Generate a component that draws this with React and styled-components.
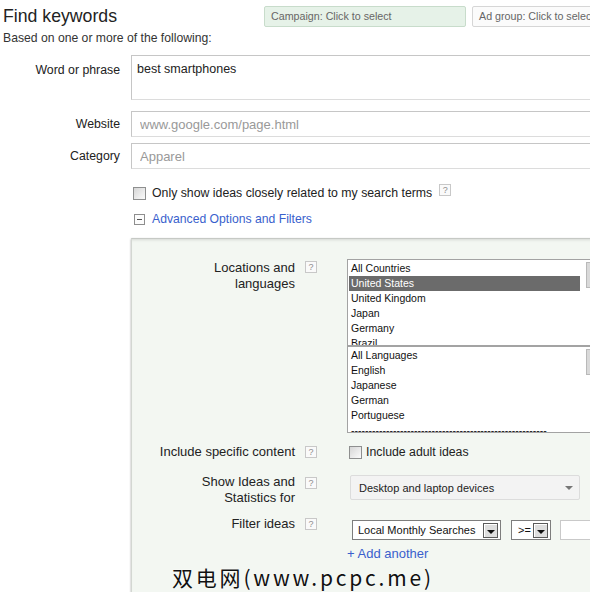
import React from 'react';
import styled, { createGlobalStyle } from 'styled-components';

const Global = createGlobalStyle`
  html, body { margin: 0; padding: 0; background: #fff; overflow: hidden; }
  body { font-family: "Liberation Sans", Arial, sans-serif; color: #222; }
`;

const Page = styled.div`
  width: 760px;
  padding: 6px 0 0 3px;
`;

const Header = styled.div`
  display: flex;
  align-items: flex-start;
`;

const TitleBlock = styled.div`
  width: 261px;
`;

const Title = styled.h1`
  margin: 0;
  font-size: 17.7px;
  line-height: 21px;
  font-weight: normal;
  color: #222;
`;

const Subtitle = styled.div`
  margin-top: 4px;
  font-size: 12.2px;
  line-height: 15px;
  color: #333;
`;

const Selectors = styled.div`
  display: flex;
  gap: 6px;
`;

const SelectorButton = styled.div`
  box-sizing: border-box;
  height: 21px;
  width: ${p => p.$w}px;
  padding: 0 6px;
  font-size: 10.7px;
  line-height: 19px;
  color: #666;
  border: 1px solid ${p => (p.$active ? '#c8dccb' : '#d6d6d6')};
  background: ${p => (p.$active ? '#e6f2e8' : '#fbfbfb')};
  border-radius: 2px;
  white-space: nowrap;
  overflow: hidden;
`;

const Form = styled.div`
  margin-top: 9px;
`;

const FormRow = styled.div`
  display: grid;
  grid-template-columns: 117px 1fr;
  column-gap: 11px;
  align-items: ${p => p.$align || 'center'};
  margin-top: ${p => p.$mt || 0}px;
`;

const FieldLabel = styled.label`
  text-align: right;
  font-size: 12.3px;
  line-height: 15px;
  color: #222;
  padding-top: ${p => p.$pt || 0}px;
`;

const TextArea = styled.textarea`
  display: block;
  box-sizing: border-box;
  width: 480px;
  height: 45px;
  margin: 0;
  border: 1px solid #c6c6c6;
  border-bottom-color: #dcdcdc;
  padding: 6px 5px;
  font: 12.5px/15px "Liberation Sans", Arial, sans-serif;
  color: #222;
  resize: none;
  overflow: hidden;
  outline: none;
`;

const TextInput = styled.input`
  display: block;
  box-sizing: border-box;
  width: 480px;
  height: 26px;
  margin: 0;
  border: 1px solid #c6c6c6;
  border-bottom-color: #dcdcdc;
  padding: 0 8px;
  font: 13px "Liberation Sans", Arial, sans-serif;
  color: #222;
  outline: none;
  &::placeholder { color: #999; }
`;

const OptionLine = styled.div`
  display: flex;
  align-items: center;
  height: 16px;
  font-size: 12.3px;
  line-height: 16px;
  color: #222;
  padding-left: ${p => p.$pl || 0}px;
`;

const Checkbox = styled.span`
  box-sizing: border-box;
  width: 13px;
  height: 13px;
  flex: none;
  border: 1px solid #8e8f8f;
  background: linear-gradient(135deg, #d6d6d6, #fbfbfb);
  margin-right: ${p => p.$gap || 6}px;
`;

const Help = styled.span`
  box-sizing: border-box;
  display: inline-flex;
  align-items: center;
  justify-content: center;
  width: 12px;
  height: 12px;
  border: 1px solid #c8c8c8;
  background: #fafafa;
  color: #8e8e8e;
  font-size: 9px;
  line-height: 10px;
  margin-left: ${p => p.$ml || 0}px;
  margin-top: ${p => p.$mt || 0}px;
  flex: none;
`;

const ToggleBox = styled.span`
  position: relative;
  box-sizing: border-box;
  width: 11px;
  height: 11px;
  border: 1px solid #8e8e8e;
  background: #fcfcfc;
  margin: 0 7px 0 1px;
  flex: none;
  &::after {
    content: '';
    position: absolute;
    left: 2px;
    right: 2px;
    top: 4px;
    height: 1px;
    background: #555;
  }
`;

const Link = styled.span`
  color: #3a5fcd;
  font-size: 12.2px;
  cursor: pointer;
`;

const Panel = styled.div`
  margin: 11px 0 0 128px;
  width: 620px;
  background: #f3f7f2;
  border-top: 1px solid #c6c9c5;
  border-left: 1px solid #d3d7d2;
  box-shadow: inset 0 3px 3px -2px rgba(0, 0, 0, 0.12), 0 1px 2px rgba(0, 0, 0, 0.35);
  padding: 21px 0 3px;
`;

const PanelRow = styled.div`
  display: grid;
  grid-template-columns: 163px 32px 1fr;
  column-gap: 10px;
  align-items: start;
  margin-top: ${p => p.$mt || 0}px;
`;

const PanelLabel = styled.div`
  text-align: right;
  font-size: 13px;
  line-height: 16px;
  color: #222;
`;

const ListStack = styled.div`
  display: flex;
  flex-direction: column;
  width: 256px;
  margin-top: -1px;
`;

const ListBox = styled.div`
  box-sizing: border-box;
  display: flex;
  height: 87px;
  border: 1px solid #a3a3a3;
  background: #fff;
  overflow: hidden;
`;

const Options = styled.div`
  width: 231px;
  margin-left: 1px;
  padding-top: 1px;
`;

const Option = styled.div`
  height: 15px;
  padding: 0 2px;
  font-size: 10.5px;
  line-height: 15px;
  white-space: nowrap;
  overflow: hidden;
  color: ${p => (p.$selected ? '#fff' : '#111')};
  background: ${p => (p.$selected ? '#6b6b6b' : 'transparent')};
`;

const ScrollTrack = styled.div`
  margin-left: auto;
  width: 16px;
  padding-top: 2px;
`;

const ScrollThumb = styled.div`
  box-sizing: border-box;
  width: 16px;
  height: 26px;
  border: 1px solid #b9b9b9;
  background: #d9d9d9;
`;

const DropButton = styled.div`
  box-sizing: border-box;
  display: flex;
  align-items: center;
  justify-content: space-between;
  width: 230px;
  height: 25px;
  margin: 1px 0 0 3px;
  padding: 0 6px 0 8px;
  border: 1px solid #dcdcdc;
  border-radius: 2px;
  background: #f3f3f3;
  font-size: 11px;
  color: #222;
`;

const Caret = styled.span`
  width: 0;
  height: 0;
  border-left: 4px solid transparent;
  border-right: 4px solid transparent;
  border-top: 4px solid #777;
`;

const FilterLine = styled.div`
  display: flex;
  align-items: center;
  margin: 4px 0 0 5px;
`;

const SelectBox = styled.div`
  box-sizing: border-box;
  display: flex;
  align-items: center;
  justify-content: space-between;
  width: ${p => p.$w}px;
  height: 20px;
  margin-right: ${p => p.$mr || 0}px;
  padding: 0 2px 0 ${p => p.$pl || 5}px;
  border: 1px solid #7d7d7d;
  background: #fff;
  font-size: 11px;
  color: #111;
  white-space: nowrap;
`;

const SelectArrow = styled.span`
  box-sizing: border-box;
  display: flex;
  align-items: center;
  justify-content: center;
  width: 15px;
  height: 15px;
  border: 1px solid #5a5a5a;
  background: #dedede;
  box-shadow: inset 1px 1px 0 #fff;
  &::after {
    content: '';
    margin-top: 3px;
    border-left: 4px solid transparent;
    border-right: 4px solid transparent;
    border-top: 4px solid #111;
  }
`;

const SmallInput = styled.div`
  box-sizing: border-box;
  width: 60px;
  height: 20px;
  border: 1px solid #c9c9c9;
  background: #fff;
`;

const AddLink = styled.div`
  margin-top: 6px;
  font-size: 13px;
  line-height: 16px;
  color: #3a5fcd;
`;

const Watermark = styled.div`
  margin-top: 3px;
  padding-left: 40px;
  height: 24px;
  font-family: "Noto Sans CJK SC", sans-serif;
  font-size: 21px;
  line-height: 24px;
  letter-spacing: 2.8px;
  color: #111;
  text-shadow: 0 0 2px #fff;
  white-space: nowrap;
`;

const countries = ['All Countries', 'United States', 'United Kingdom', 'Japan', 'Germany', 'Brazil'];
const languages = ['All Languages', 'English', 'Japanese', 'German', 'Portuguese', '-'.repeat(56)];

export default function App() {
  return (
    <Page>
      <Global />
      <Header>
        <TitleBlock>
          <Title>Find keywords</Title>
          <Subtitle>Based on one or more of the following:</Subtitle>
        </TitleBlock>
        <Selectors>
          <SelectorButton $active $w={202}>Campaign: Click to select</SelectorButton>
          <SelectorButton $w={200}>Ad group: Click to select</SelectorButton>
        </Selectors>
      </Header>

      <Form>
        <FormRow $align="start">
          <FieldLabel $pt={8}>Word or phrase</FieldLabel>
          <TextArea readOnly value="best smartphones" />
        </FormRow>
        <FormRow $mt={11}>
          <FieldLabel>Website</FieldLabel>
          <TextInput readOnly placeholder="www.google.com/page.html" />
        </FormRow>
        <FormRow $mt={6}>
          <FieldLabel>Category</FieldLabel>
          <TextInput readOnly placeholder="Apparel" />
        </FormRow>
        <FormRow $mt={16}>
          <span />
          <OptionLine $pl={2}>
            <Checkbox $gap={6} />
            Only show ideas closely related to my search terms
            <Help $ml={7} $mt={-6}>?</Help>
          </OptionLine>
        </FormRow>
        <FormRow $mt={10}>
          <span />
          <OptionLine $pl={2}>
            <ToggleBox />
            <Link>Advanced Options and Filters</Link>
          </OptionLine>
        </FormRow>
      </Form>

      <Panel>
        <PanelRow>
          <PanelLabel>Locations and<br />languages</PanelLabel>
          <Help $mt={1}>?</Help>
          <ListStack>
            <ListBox>
              <Options>
                {countries.map(c => (
                  <Option key={c} $selected={c === 'United States'}>{c}</Option>
                ))}
              </Options>
              <ScrollTrack><ScrollThumb /></ScrollTrack>
            </ListBox>
            <ListBox>
              <Options>
                {languages.map(l => (
                  <Option key={l}>{l}</Option>
                ))}
              </Options>
              <ScrollTrack><ScrollThumb /></ScrollTrack>
            </ListBox>
          </ListStack>
        </PanelRow>

        <PanelRow $mt={11}>
          <PanelLabel>Include specific content</PanelLabel>
          <Help $mt={2}>?</Help>
          <OptionLine $pl={2}>
            <Checkbox $gap={4} />
            Include adult ideas
          </OptionLine>
        </PanelRow>

        <PanelRow $mt={14}>
          <PanelLabel>Show Ideas and<br />Statistics for</PanelLabel>
          <Help $mt={3}>?</Help>
          <DropButton>
            Desktop and laptop devices
            <Caret />
          </DropButton>
        </PanelRow>

        <PanelRow $mt={10}>
          <PanelLabel>Filter ideas</PanelLabel>
          <Help $mt={2}>?</Help>
          <FilterLine>
            <SelectBox $w={149} $mr={10}>
              Local Monthly Searches
              <SelectArrow />
            </SelectBox>
            <SelectBox $w={40} $mr={9} $pl={6}>
              &gt;=
              <SelectArrow />
            </SelectBox>
            <SmallInput />
          </FilterLine>
        </PanelRow>

        <PanelRow>
          <span />
          <span />
          <AddLink>+ Add another</AddLink>
        </PanelRow>

        <Watermark>双电网(www.pcpc.me)</Watermark>
      </Panel>
    </Page>
  );
}
